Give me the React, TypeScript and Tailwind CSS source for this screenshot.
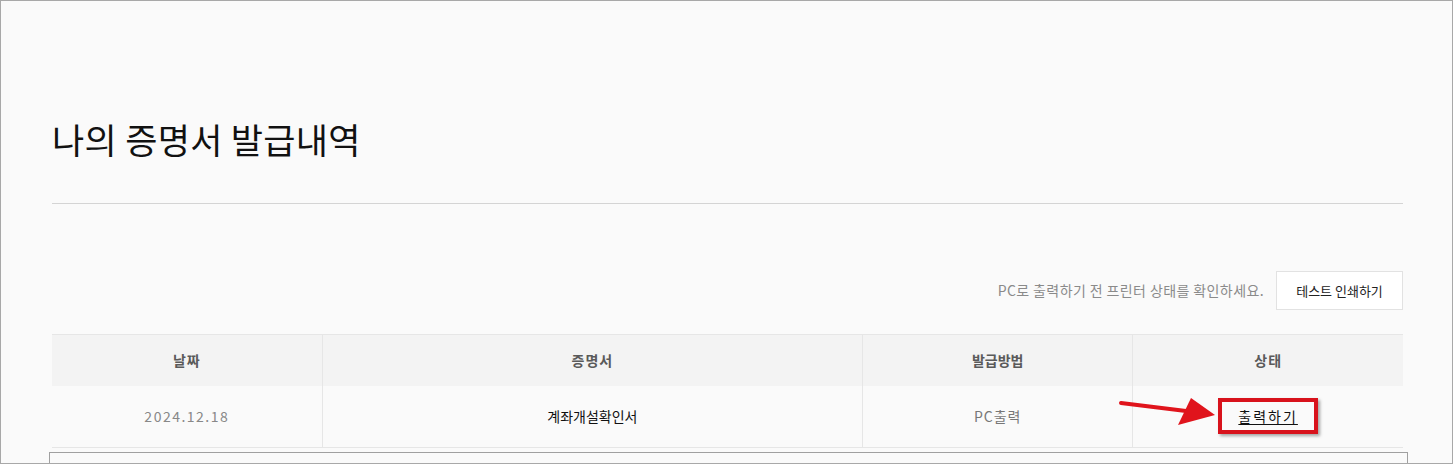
export default function App() {
  const font = { fontFamily: '"Noto Sans CJK KR", "Noto Sans", sans-serif' };
  return (
    <div className="relative w-[1453px] h-[464px] overflow-hidden border border-[#a8a8a8] bg-[#fafafa]" style={font}>
      <div className="pl-[51px] pr-[49px]">
        <h1 className="mt-[116px] h-[44px] text-[35px] leading-[44px] text-[#111] tracking-[0.3px]">나의 증명서 발급내역</h1>
        <div className="mt-[42px] h-px bg-[#d4d4d4]" />
        <div className="mt-[67px] flex items-center justify-end gap-[12px]">
          <span className="text-[14px] text-[#8a8a8a] tracking-[0.4px]">PC로 출력하기 전 프린터 상태를 확인하세요.</span>
          <button className="w-[127px] h-[39px] border border-[#e2e2e2] bg-white text-[13px] text-[#222]">테스트 인쇄하기</button>
        </div>
        <table className="mt-[24px] w-full border-collapse table-fixed">
          <thead>
            <tr className="h-[51px] bg-[#f3f3f3] border-t border-[#e6e6e6]">
              <th className="w-[270px] text-[14px] font-bold text-[#5a5a5a] tracking-[1px] border-r border-[#e6e6e6]">날짜</th>
              <th className="w-[540px] text-[14px] font-bold text-[#5a5a5a] tracking-[1px] border-r border-[#e6e6e6]">증명서</th>
              <th className="w-[270px] text-[14px] font-bold text-[#5a5a5a] border-r border-[#e6e6e6]">발급방법</th>
              <th className="w-[270px] text-[14px] font-bold text-[#5a5a5a] tracking-[1px]">상태</th>
            </tr>
          </thead>
          <tbody>
            <tr className="h-[62px] border-b border-[#e6e6e6]">
              <td className="text-center text-[14px] text-[#888] tracking-[1.5px] border-r border-[#e6e6e6]">2024.12.18</td>
              <td className="text-center text-[14px] text-[#111] border-r border-[#e6e6e6]">계좌개설확인서</td>
              <td className="text-center text-[14px] text-[#777] tracking-[1px] border-r border-[#e6e6e6]">PC출력</td>
              <td className="text-center">
                <span className="inline-block w-[100px] h-[36px] leading-[28px] border-[4px] border-[#d8121c] shadow-[2px_2px_3px_rgba(0,0,0,0.35)] text-[14px] text-[#111] tracking-[2px] underline underline-offset-2">출력하기</span>
              </td>
            </tr>
          </tbody>
        </table>
      </div>
      <div className="ml-[48px] mr-[44px] mt-[4px] h-[40px] border border-[#a0a0a0] bg-[#fafafa]" />
      <svg className="absolute left-[1110px] top-[390px]" width="115" height="45" viewBox="0 0 115 45">
        <line x1="10" y1="12" x2="75" y2="20" stroke="#e0141c" strokeWidth="4" strokeLinecap="round" />
        <polygon points="80,7 104,24 67,34" fill="#e0141c" />
      </svg>
    </div>
  );
}
